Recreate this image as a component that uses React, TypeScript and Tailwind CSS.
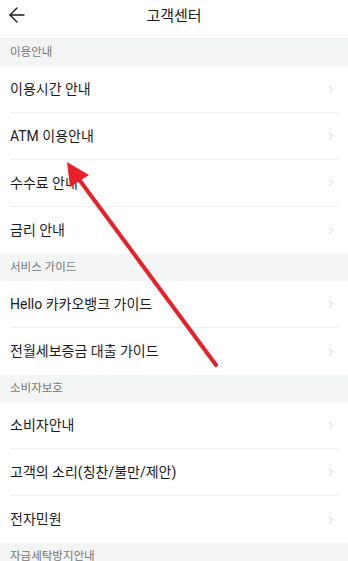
import { ArrowLeft, ChevronRight } from "lucide-react";

type Section = { title: string; items: string[] };

const sections: Section[] = [
  { title: "이용안내", items: ["이용시간 안내", "ATM 이용안내", "수수료 안내", "금리 안내"] },
  { title: "서비스 가이드", items: ["Hello 카카오뱅크 가이드", "전월세보증금 대출 가이드"] },
  { title: "소비자보호", items: ["소비자안내", "고객의 소리(칭찬/불만/제안)", "전자민원"] },
  { title: "자금세탁방지안내", items: [] },
];

const App = () => {
  return (
    <div
      className="relative w-[348px] h-[561px] overflow-hidden bg-white text-[#1a1a1a]"
      style={{ fontFamily: 'Roboto, "Noto Sans CJK KR", sans-serif' }}
    >
      <div className="relative flex items-center justify-center h-[39px] border-b border-[#f0f0f0]">
        <ArrowLeft className="absolute left-[5px] top-[3px] w-[24px] h-[24px]" strokeWidth={1.4} />
        <h1 className="text-[15px] -mt-[6px]">고객센터</h1>
      </div>

      {sections.map((section) => (
        <div key={section.title}>
          <div className="h-[27px] bg-[#f3f4f4] flex items-center px-[10px] text-[11.5px] text-[#777]">
            {section.title}
          </div>
          {section.items.map((item, i) => (
            <div
              key={item}
              className={`mx-[10px] h-[47px] flex items-center justify-between ${
                i < section.items.length - 1 ? "border-b border-[#eeeeee]" : ""
              }`}
            >
              <span className="text-[14px]">{item}</span>
              <ChevronRight className="w-[12px] h-[12px] text-[#b5b5b5] mr-[1px]" strokeWidth={1.4} />
            </div>
          ))}
        </div>
      ))}

      <svg className="absolute inset-0 pointer-events-none" width="348" height="561">
        <line x1="216" y1="365" x2="78" y2="178" stroke="#e8202a" strokeWidth="4" strokeLinecap="round" />
        <polygon points="67,162 89,175 70,187" fill="#e8202a" />
      </svg>
    </div>
  );
};

export default App;
